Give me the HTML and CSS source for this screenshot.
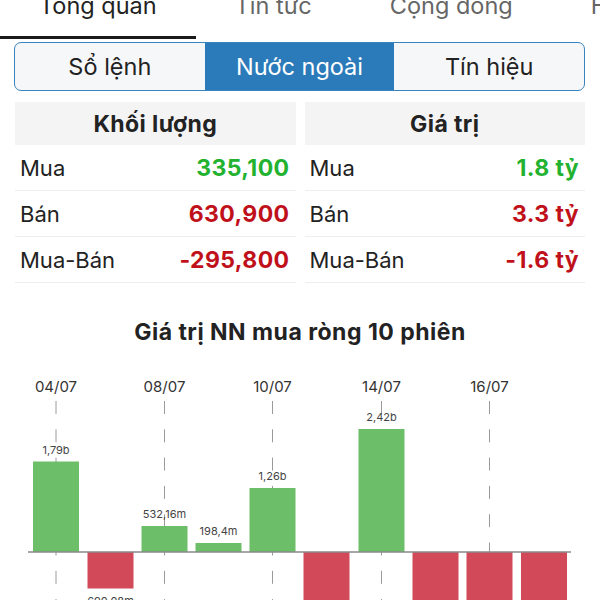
FILE: index.html
```html
<!DOCTYPE html>
<html lang="vi">
<head>
<meta charset="utf-8">
<title>Nước ngoài</title>
<link rel="stylesheet" href="styles.css">
</head>
<body>
<nav class="tabs">
  <div class="tab active">Tổng quan</div>
  <div class="tab">Tin tức</div>
  <div class="tab">Cộng đồng</div>
  <div class="tab">Hồ sơ</div>
</nav>

<div class="seg">
  <div class="seg-item">Sổ lệnh</div>
  <div class="seg-item on">Nước ngoài</div>
  <div class="seg-item">Tín hiệu</div>
</div>

<section class="stats">
  <div class="col">
    <div class="col-head">Khối lượng</div>
    <div class="row"><span class="lbl">Mua</span><span class="val up">335,100</span></div>
    <div class="row"><span class="lbl">Bán</span><span class="val down">630,900</span></div>
    <div class="row"><span class="lbl">Mua-Bán</span><span class="val down">-295,800</span></div>
  </div>
  <div class="col">
    <div class="col-head">Giá trị</div>
    <div class="row"><span class="lbl">Mua</span><span class="val up">1.8 tỷ</span></div>
    <div class="row"><span class="lbl">Bán</span><span class="val down">3.3 tỷ</span></div>
    <div class="row"><span class="lbl">Mua-Bán</span><span class="val down">-1.6 tỷ</span></div>
  </div>
</section>

<h2 class="chart-title">Giá trị NN mua ròng 10 phiên</h2>

<svg class="chart" width="600" height="250" viewBox="0 0 600 250">
  <g class="grid">
    <line x1="56" y1="41" x2="56" y2="250"/>
    <line x1="164.5" y1="41" x2="164.5" y2="250"/>
    <line x1="272.5" y1="41" x2="272.5" y2="250"/>
    <line x1="381.5" y1="41" x2="381.5" y2="250"/>
    <line x1="489.5" y1="41" x2="489.5" y2="250"/>
  </g>
  <g class="dates">
    <text x="56" y="32">04/07</text>
    <text x="164.5" y="32">08/07</text>
    <text x="272.5" y="32">10/07</text>
    <text x="381.5" y="32">14/07</text>
    <text x="489.5" y="32">16/07</text>
  </g>
  <g class="bars">
    <rect class="pos" x="33" y="101.5" width="46" height="90.5"/>
    <rect class="neg" x="87.5" y="192" width="46" height="36.5"/>
    <rect class="pos" x="141.5" y="166" width="46" height="26"/>
    <rect class="pos" x="195.5" y="183" width="46" height="9"/>
    <rect class="pos" x="249.5" y="128" width="46" height="64"/>
    <rect class="neg" x="303.5" y="192" width="46" height="60"/>
    <rect class="pos" x="358.5" y="69" width="46" height="123"/>
    <rect class="neg" x="412.5" y="192" width="46" height="60"/>
    <rect class="neg" x="466.5" y="192" width="46" height="60"/>
    <rect class="neg" x="521" y="192" width="46" height="60"/>
  </g>
  <line class="axis" x1="28" y1="192" x2="571" y2="192"/>
  <g class="vals">
    <text x="56" y="93.5">1,79b</text>
    <text x="110.5" y="245">690,08m</text>
    <text x="164.5" y="158">532,16m</text>
    <text x="218.5" y="175">198,4m</text>
    <text x="272.5" y="120">1,26b</text>
    <text x="381.5" y="61">2,42b</text>
  </g>
</svg>
</body>
</html>
```

FILE: styles.css
```css
* { box-sizing: border-box; }

html, body {
  margin: 0;
  padding: 0;
  background: #ffffff;
  overflow: hidden;
}

body {
  font-family: "Inter", "Noto Sans", sans-serif;
  color: #222;
}

.tabs {
  display: flex;
  white-space: nowrap;
  margin-top: -9px;
}

.tab {
  flex: none;
  padding: 0 39px;
  height: 48px;
  line-height: 30px;
  font-size: 23.5px;
  color: #666;
  border-bottom: 3px solid transparent;
}

.tab.active {
  color: #222;
  border-bottom-color: #1a1a1a;
}

.seg {
  display: flex;
  margin: 3px 15px 0 14px;
  height: 49px;
  border: 1.5px solid #3a84bd;
  border-radius: 7px;
  overflow: hidden;
  background: #f6f7f9;
}

.seg-item {
  flex: 1;
  display: flex;
  align-items: center;
  justify-content: center;
  font-size: 23.5px;
  color: #222;
}

.seg-item.on {
  background: #2b7bba;
  color: #ffffff;
}

.stats {
  display: grid;
  grid-template-columns: 1fr 1fr;
  column-gap: 9px;
  padding: 0 15px;
  margin-top: 11px;
}

.col-head {
  height: 43px;
  background: #f4f4f5;
  display: flex;
  align-items: center;
  justify-content: center;
  font-size: 23px;
  letter-spacing: 0.4px;
  font-weight: 700;
  color: #222;
}

.row {
  height: 46px;
  display: flex;
  align-items: center;
  justify-content: space-between;
  padding: 0 6px 0 5px;
  border-bottom: 1px solid #eeeeee;
  font-size: 22px;
}

.lbl { color: #222; }

.val {
  font-weight: 700;
  font-size: 23px;
  letter-spacing: 0.4px;
}
.val.up { color: #22b22f; }
.val.down { color: #c0111b; }

.chart-title {
  margin: 34px 0 0;
  height: 42px;
  text-align: center;
  font-size: 23px;
  letter-spacing: 0.5px;
  font-weight: 700;
  line-height: 30px;
  color: #222;
}

.chart {
  display: block;
  margin-top: 1px;
}

.grid line {
  stroke: #9a9a9a;
  stroke-width: 1;
  stroke-dasharray: 13 15.3;
}

.dates text {
  font-family: "Inter", "Noto Sans", sans-serif;
  font-size: 15px;
  fill: #333;
  text-anchor: middle;
}

.vals text {
  font-family: "Inter", "Noto Sans", sans-serif;
  font-size: 11px;
  fill: #444;
  text-anchor: middle;
}

.bars .pos { fill: #6cbe68; }
.bars .neg { fill: #d24a5a; }

.axis {
  stroke: #8a8a8a;
  stroke-width: 1.5;
}
```
